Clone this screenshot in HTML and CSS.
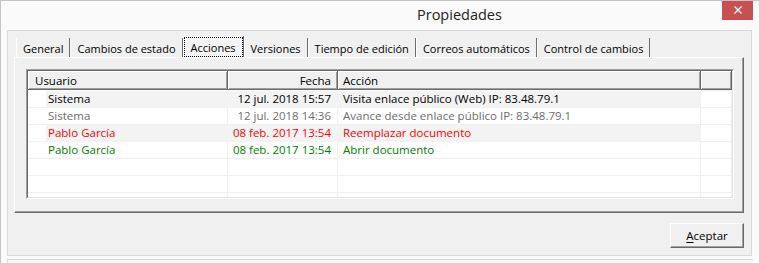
FILE: index.html
```html
<!DOCTYPE html>
<html lang="es">

<head>
    <meta charset="UTF-8">
    <meta name="viewport" content="width=device-width, initial-scale=1.0">
    <title>Propiedades</title>
    <link rel="stylesheet" href="styles.css">
</head>

<body>

    <div class="window">
        <div class="titlebar">
            <span class="title">Propiedades</span>
            <button class="close" type="button" aria-label="Cerrar">
                <svg width="8" height="8" viewBox="0 0 8 8">
                    <path d="M0.5 0.5 L7.5 7.5 M7.5 0.5 L0.5 7.5" stroke="#fff" stroke-width="1.3" fill="none" />
                </svg>
            </button>
        </div>

        <div class="dialog">
            <ul class="tabs">
                <li class="tab">General</li>
                <li class="tab">Cambios de estado</li>
                <li class="tab active"><span class="focus">Acciones</span></li>
                <li class="tab">Versiones</li>
                <li class="tab">Tiempo de edición</li>
                <li class="tab">Correos automáticos</li>
                <li class="tab">Control de cambios</li>
            </ul>

            <div class="panel">
                <div class="list">
                    <div class="list-body">
                        <table>
                            <colgroup>
                                <col class="col-user">
                                <col class="col-date">
                                <col class="col-action">
                                <col class="col-fill">
                            </colgroup>
                            <thead>
                                <tr>
                                    <th class="user">Usuario</th>
                                    <th class="date">Fecha</th>
                                    <th class="action">Acción</th>
                                    <th></th>
                                </tr>
                            </thead>
                            <tbody>
                                <tr class="alt">
                                    <td class="user">Sistema</td>
                                    <td class="date">12 jul. 2018 15:57</td>
                                    <td class="action">Visita enlace público (Web) IP: 83.48.79.1</td>
                                    <td></td>
                                </tr>
                                <tr class="muted">
                                    <td class="user">Sistema</td>
                                    <td class="date">12 jul. 2018 14:36</td>
                                    <td class="action">Avance desde enlace público IP: 83.48.79.1</td>
                                    <td></td>
                                </tr>
                                <tr class="alt red">
                                    <td class="user">Pablo García</td>
                                    <td class="date">08 feb. 2017 13:54</td>
                                    <td class="action">Reemplazar documento</td>
                                    <td></td>
                                </tr>
                                <tr class="green">
                                    <td class="user">Pablo García</td>
                                    <td class="date">08 feb. 2017 13:54</td>
                                    <td class="action">Abrir documento</td>
                                    <td></td>
                                </tr>
                                <tr>
                                    <td></td>
                                    <td></td>
                                    <td></td>
                                    <td></td>
                                </tr>
                                <tr>
                                    <td></td>
                                    <td></td>
                                    <td></td>
                                    <td></td>
                                </tr>
                                <tr>
                                    <td></td>
                                    <td></td>
                                    <td></td>
                                    <td></td>
                                </tr>
                            </tbody>
                        </table>
                    </div>
                </div>
            </div>

            <div class="buttons">
                <button class="btn" type="button"><u>A</u>ceptar</button>
            </div>
        </div>

        <div class="below"></div>
    </div>

</body>

</html>
```

FILE: styles.css
```css
body {
    margin: 0;
    font-family: "Open Sans", "Noto Sans", sans-serif;
    font-size: 11.5px;
    color: #000;
    background: #fafafa;
}

.window {
    height: 263px;
    box-sizing: border-box;
    border-top: 1px solid #c4c4c4;
    border-left: 1px solid #c4c4c4;
    overflow: hidden;
}

/* title bar */

.titlebar {
    display: flex;
    height: 29px;
}

.title {
    margin-left: 416px;
    margin-top: 4px;
    font-size: 14.5px;
    color: #222;
}

.close {
    margin-left: auto;
    margin-right: 6px;
    margin-top: -1px;
    width: 31px;
    height: 20px;
    padding: 0;
    border: none;
    background-color: #c75050;
    display: flex;
    align-items: center;
    justify-content: center;
}

/* dialog body */

.dialog {
    margin-left: 6px;
    width: 745px;
    height: 226px;
    box-sizing: border-box;
    padding: 7px 7px 0 6px;
    border: 1px solid #d9d9d9;
    background-color: #f0f0f0;
}

.tabs {
    display: flex;
    align-items: flex-start;
    height: 19px;
    margin: 0 0 0 2px;
    padding: 0;
    list-style: none;
    font-size: 11px;
}

.tab {
    height: 19px;
    box-sizing: border-box;
    padding: 3px 6px 0;
    line-height: 16px;
    border-left: 1px solid #fff;
    border-right: 1px solid #6d6d6d;
    white-space: nowrap;
}

.tab.active {
    margin-top: -2px;
    height: 21px;
    padding: 1px 0 0;
    background-color: #f4f4f4;
}

.focus {
    display: block;
    height: 20px;
    box-sizing: border-box;
    padding: 3px 7px 0;
    line-height: 16px;
    outline: 1px dotted #000;
    outline-offset: -1px;
}

.panel {
    width: 730px;
    height: 156px;
    box-sizing: border-box;
    padding: 11px 0 0 11px;
    border-top: 1px solid #fff;
    border-left: 1px solid #fff;
    border-right: 1px solid #696969;
    border-bottom: 1px solid #696969;
    box-shadow: inset -1px -1px 0 #a0a0a0;
}

/* list view */

.list {
    width: 708px;
    height: 130px;
    box-sizing: border-box;
    border: 1px solid;
    border-color: #a0a0a0 #fff #fff #a0a0a0;
}

.list-body {
    height: 100%;
    box-sizing: border-box;
    border: 1px solid;
    border-color: #696969 #e3e3e3 #e3e3e3 #696969;
    background-color: #fff;
    overflow: hidden;
}

table {
    width: 704px;
    table-layout: fixed;
    border-collapse: separate;
    border-spacing: 0;
}

.col-user {
    width: 200px;
}

.col-date {
    width: 110px;
}

.col-action {
    width: 363px;
}

.col-fill {
    width: 31px;
}

th {
    height: 18px;
    padding: 0;
    font-weight: normal;
    text-align: left;
    background-color: #f0f0f0;
    border-right: 1px solid #696969;
    border-bottom: 1px solid #696969;
    box-shadow: inset 1px 1px 0 #fff, inset -1px -1px 0 #a0a0a0;
}

th.user {
    padding-left: 7px;
}

th.date {
    text-align: right;
    padding-right: 6px;
}

th.action {
    padding-left: 5px;
}

thead tr {
    height: 19px;
}

td {
    height: 16px;
    padding: 0;
    line-height: 16px;
    white-space: nowrap;
    overflow: hidden;
    border-right: 1px solid #f0f0f0;
    border-bottom: 1px solid #f0f0f0;
}

tbody tr:first-child td {
    border-top: 1px solid #fff;
}

td.user {
    padding-left: 20px;
}

td.date {
    text-align: right;
    padding-right: 6px;
}

td.action {
    padding-left: 5px;
}

tr.alt td {
    background-color: #f3f3f3;
    border-color: #f3f3f3;
}

tr.alt td.user {
    background: linear-gradient(90deg, #fff 18px, #f3f3f3 18px);
}

tr.alt td:last-child {
    background-color: #fff;
    border-color: #f0f0f0;
}

tr.muted {
    color: #6d6d6d;
}

tr.red {
    color: #f00;
}

tr.green {
    color: #008000;
}

/* bottom buttons */

.buttons {
    display: flex;
    justify-content: flex-end;
    width: 730px;
    margin-top: 10px;
}

.btn {
    width: 74px;
    height: 25px;
    padding: 0;
    font-family: inherit;
    font-size: inherit;
    color: #000;
    background-color: #f0f0f0;
    border: 1px solid;
    border-color: #fff #696969 #696969 #fff;
    box-shadow: inset -1px -1px 0 #a0a0a0;
}

.btn u {
    text-underline-offset: 2px;
}

.below {
    margin: 3px 0 0 6px;
    width: 745px;
    height: 10px;
    border-top: 1px solid #d9d9d9;
    border-left: 1px solid #d9d9d9;
    background-color: #f7f7f7;
}
```
